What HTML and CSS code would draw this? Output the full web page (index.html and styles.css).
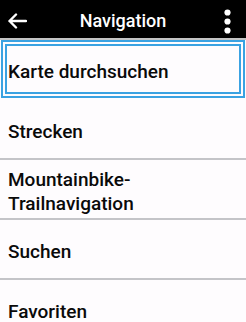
FILE: index.html
```html
<!DOCTYPE html>
<html lang="de">
<head>
<meta charset="utf-8">
<link rel="stylesheet" href="styles.css">
</head>
<body>
<div class="screen">
  <header class="bar">
    <div class="bar-left">
      <svg class="back" width="20" height="16" viewBox="0 0 20 16"><path d="M19 8H2.5M9 1.5L2.5 8L9 14.5" fill="none" stroke="#fff" stroke-width="2.4" stroke-linecap="round" stroke-linejoin="round"/></svg>
    </div>
    <div class="title">Navigation</div>
    <div class="bar-right">
      <svg class="more" width="7" height="25" viewBox="0 0 7 25"><circle cx="3.5" cy="3.5" r="3.1" fill="#fff"/><circle cx="3.5" cy="12.5" r="3.1" fill="#fff"/><circle cx="3.5" cy="21.5" r="3.1" fill="#fff"/></svg>
    </div>
  </header>
  <ul class="menu">
    <li class="item focused"><span class="label">Karte durchsuchen</span></li>
    <li class="item"><span class="label">Strecken</span></li>
    <li class="item"><span class="label">Mountainbike-<br>Trailnavigation</span></li>
    <li class="item"><span class="label">Suchen</span></li>
    <li class="item"><span class="label">Favoriten</span></li>
  </ul>
</div>
</body>
</html>
```

FILE: styles.css
```css
html, body {
  margin: 0;
  padding: 0;
  background: #fefcfe;
}
.screen {
  width: 246px;
  height: 322px;
  overflow: hidden;
  font-family: Roboto, "Liberation Sans", Arial, sans-serif;
}
.bar {
  height: 34px;
  padding-top: 4px;
  background: #000;
  border-bottom: 2px solid #c4c4c4;
  display: grid;
  grid-template-columns: 1fr auto 1fr;
  align-items: center;
}
.bar-left {
  padding-left: 7px;
  display: flex;
  align-items: center;
}
.back { display: block; }
.title {
  color: #fff;
  font-size: 18px;
  font-weight: 500;
  line-height: 20px;
}
.bar-right {
  display: flex;
  justify-content: flex-end;
  padding-right: 15px;
}
.more { display: block; }
.menu {
  list-style: none;
  margin: 0;
  padding: 0;
}
.item {
  box-sizing: border-box;
  height: 60px;
  border-bottom: 2px solid #c4c4c8;
  display: flex;
  align-items: center;
  padding: 6px 8px 0;
  color: #0a0a0a;
  font-size: 19px;
  font-weight: 500;
  line-height: 24px;
}
.item.focused {
  border-bottom-color: transparent;
  position: relative;
}
.item.focused::after {
  content: "";
  position: absolute;
  left: 1px;
  right: 1px;
  top: 0;
  bottom: 0;
  border: 2px solid #3aa2e2;
  box-shadow: inset 0 0 0 2px #fefcfe, inset 0 0 0 4px #3aa2e2;
}
```
